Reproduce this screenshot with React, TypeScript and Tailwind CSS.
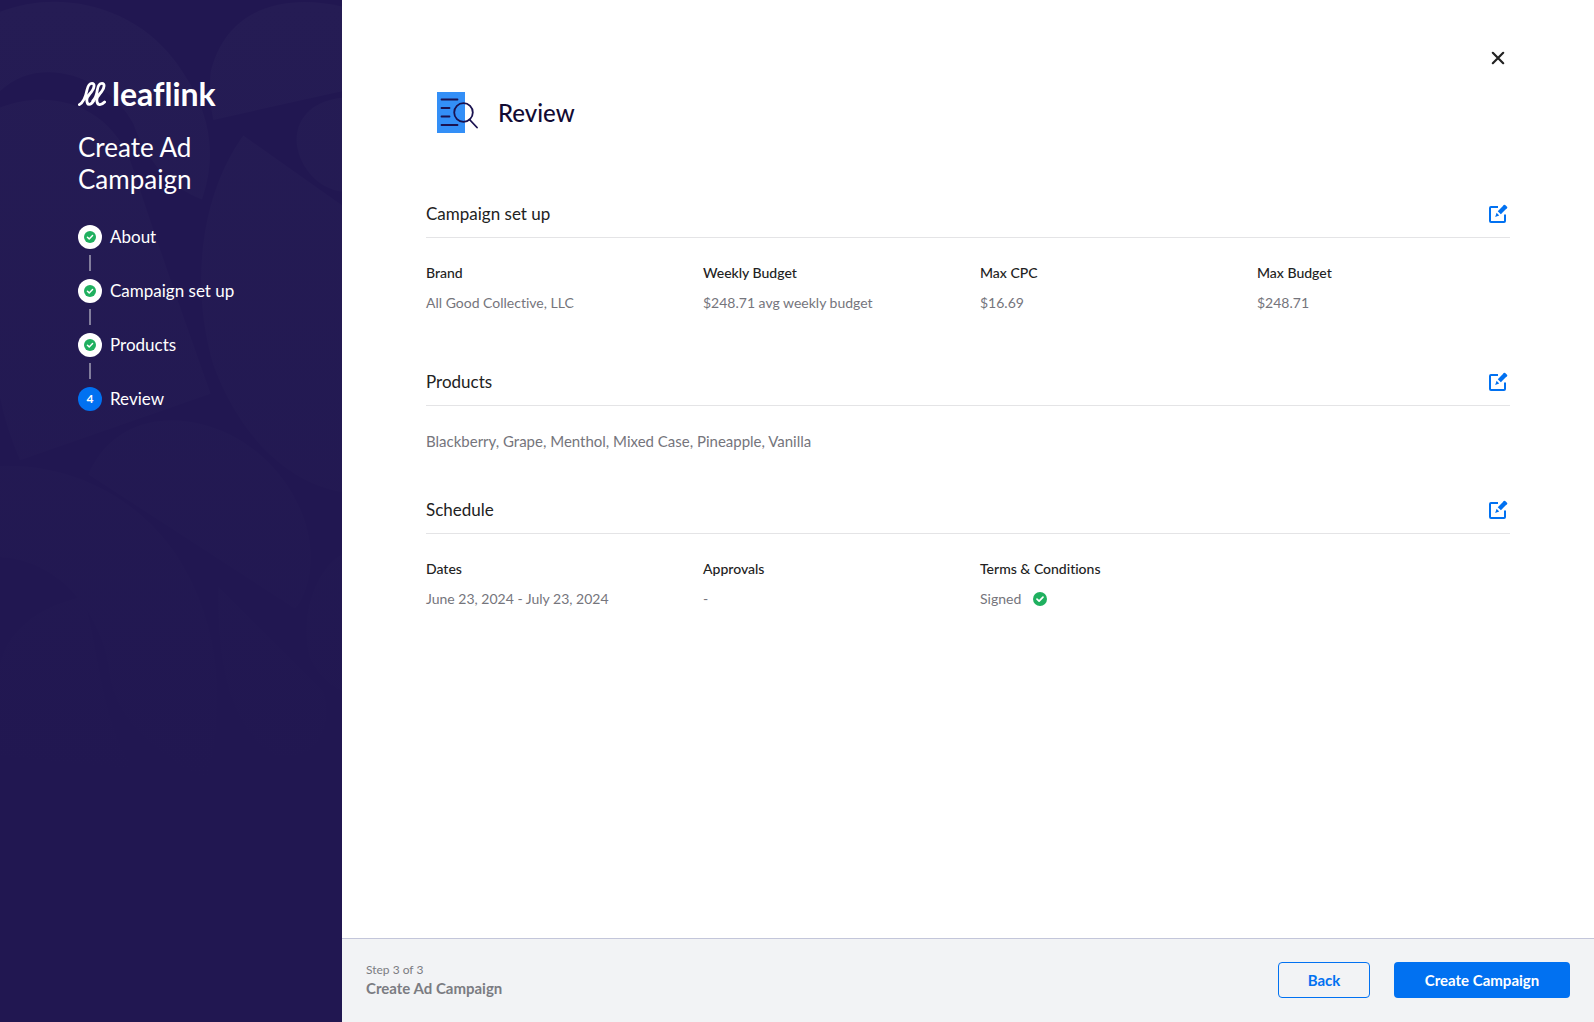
import type { ReactNode } from 'react';

type Field = { label: string; value: ReactNode };

const steps = [
  { label: 'About', done: true },
  { label: 'Campaign set up', done: true },
  { label: 'Products', done: true },
  { label: 'Review', done: false }
];

function CheckBadge({ className }: { className?: string }) {
  return (
    <svg viewBox="0 0 14 14" className={className} aria-hidden="true">
      <circle cx="7" cy="7" r="7" fill="#1fb05f" />
      <path
        d="M4 7.2 6.1 9.2 10 5.2"
        fill="none"
        stroke="#fff"
        strokeWidth="1.7"
        strokeLinecap="round"
        strokeLinejoin="round"
      />
    </svg>
  );
}

function EditIcon() {
  return (
    <svg viewBox="0 0 20 20" className="size-5" aria-hidden="true">
      <path
        d="M10 3H3a1 1 0 0 0-1 1v13a1 1 0 0 0 1 1h13a1 1 0 0 0 1-1v-6.5"
        fill="none"
        stroke="#0171f1"
        strokeWidth="2"
      />
      <path d="M17.500 2.500 11.300 8.700" stroke="#0171f1" strokeWidth="4.400" />
      <path d="M16.500 1.700 18.300 3.500" stroke="#0171f1" strokeWidth="2" strokeLinecap="round" />
      <path d="M8.600 8.8 11.200 11.400 7.200 12.900Z" fill="#0171f1" />
    </svg>
  );
}

function ReviewIcon() {
  return (
    <svg viewBox="0 0 42 42" className="size-[42px]" aria-hidden="true">
      <rect width="28" height="41" x="1" y="0" fill="#338ff7" />
      <g fill="none" stroke="#1a1250" strokeWidth="1.8" strokeLinecap="round">
        <path d="M5.500 7.500h16M5.500 16h8M5.500 24.500h8M5.500 33h16" />
        <circle cx="27.500" cy="20.500" r="9.300" />
        <path d="m33.500 27.500 7.500 8" />
      </g>
    </svg>
  );
}

function Logo() {
  return (
    <div className="flex h-8 items-center text-white">
      <svg viewBox="0 0 28 24" className="mr-1.5 h-6 w-7" aria-hidden="true">
        <g fill="none" stroke="#fff" strokeWidth="2.800" strokeLinecap="round" strokeLinejoin="round">
          <path d="M1.400 22.600C6 20 8 13 9 8 10 3.500 11.500 1.400 14 1.400c3 0 2.500 4.200 0 7.600-2 3-5.200 5-5.200 9 0 6 4 5.500 6.700 1" />
          <path d="M14.800 19c3-3 4-7 4.500-11C20 3.500 21.500 1.400 24 1.400c3 0 2.500 4.200 0 7.600-2 3-5.200 5-5.200 9 0 6 4.500 5.500 7.800 2" />
        </g>
      </svg>
      <span className="text-[32px] leading-8 font-bold">leaflink</span>
    </div>
  );
}

// Faint petals behind the step list
function Petals() {
  return (
    <svg
      viewBox="0 0 1026 1568"
      preserveAspectRatio="none"
      className="absolute inset-0 size-full"
      aria-hidden="true"
    >
      <defs>
        <linearGradient id="petal" gradientUnits="userSpaceOnUse" x1="0" y1="0" x2="0" y2="1200">
          <stop offset="0" stopColor="#251c54" />
          <stop offset="1" stopColor="#211751" />
        </linearGradient>
      </defs>
      <g fill="url(#petal)">
        <path d="M0 18C180-18 400 10 520 90 640 170 650 240 606 306 520 290 440 250 400 190 330 120 120 80 0 140Z" />
        <path d="M632 110C680 10 860-10 1026 10V140L640 184Q625 150 632 110Z" />
        <path d="M1026 150C930 155 885 185 890 220 900 260 960 290 1026 294Z" />
        <path d="M0 165C150 135 340 160 400 260 470 370 560 500 632 604L60 706Q20 660 0 610Z" />
        <path d="M730 208C600 300 570 440 640 560 720 670 860 740 1026 755V315Z" />
        <path d="M265 728C330 650 480 635 600 650 820 675 980 800 920 900Q905 925 885 934Z" />
        <path d="M0 715C200 710 420 760 540 860 660 960 680 1080 620 1200 500 1160 360 1120 330 1040 320 960 200 860 0 855Z" />
        <path d="M250 915C110 930 20 970 0 1020V1160L400 1180C300 1100 300 1000 250 915Z" />
        <path d="M655 900C650 1020 690 1120 830 1160 960 1170 1000 1110 970 1060Z" />
        <path d="M1026 850C930 880 900 960 930 1010 960 1040 1000 1055 1026 1060Z" />
      </g>
    </svg>
  );
}

function Section({
  title,
  className,
  children
}: {
  title: string;
  className?: string;
  children: ReactNode;
}) {
  return (
    <section className={className}>
      <div className="flex items-center justify-between border-b border-[#e4e4e6] pr-0.5 pb-[11px]">
        <h2 className="text-[17px] leading-6 text-[#222]">{title}</h2>
        <button type="button" aria-label={`Edit ${title}`}>
          <EditIcon />
        </button>
      </div>
      <div className="pt-[23px]">{children}</div>
    </section>
  );
}

function Fields({ items }: { items: Field[] }) {
  return (
    <dl className="grid grid-cols-4 gap-6">
      {items.map((item) => (
        <div key={item.label}>
          <dt className="text-sm leading-6 font-medium text-[#222]">{item.label}</dt>
          <dd className="mt-1.5 text-sm leading-6 text-[#75757c]">
            {item.value}
          </dd>
        </div>
      ))}
    </dl>
  );
}

export default function App() {
  return (
    <div className="flex min-h-screen bg-white font-['Lato','Open_Sans',sans-serif] [font-variant-ligatures:none]">
      <aside className="relative w-[342px] shrink-0 bg-[#211751] px-[78px] pt-[78px] text-white">
        <Petals />
        <div className="relative">
          <Logo />
          <h2 className="mt-[21px] text-[26px] leading-8">Create Ad Campaign</h2>
          <ol className="mt-[30px]">
            {steps.map((step, index) => (
              <li key={step.label}>
                {index > 0 ? (
                  <div className="mt-1.5 mb-2 ml-[11px] h-4 w-0.5 bg-[#827d9c]" />
                ) : null}
                <div className="flex items-center gap-2">
                  {step.done ? (
                    <span className="flex size-6 items-center justify-center rounded-full bg-white">
                      <CheckBadge className="size-3" />
                    </span>
                  ) : (
                    <span className="flex size-6 items-center justify-center rounded-full bg-[#0171f1] text-xs font-bold">
                      {index + 1}
                    </span>
                  )}
                  <span className="text-[17px] leading-6">{step.label}</span>
                </div>
              </li>
            ))}
          </ol>
        </div>
      </aside>

      <div className="flex min-w-0 flex-1 flex-col">
        <main className="flex-1 px-[84px] pt-12">
          <div className="flex justify-end pr-0.5">
            <button type="button" aria-label="Close">
              <svg viewBox="0 0 20 20" className="size-5" aria-hidden="true">
                <path
                  d="m4.800 4.800 10.400 10.400M15.200 4.800 4.800 15.200"
                  stroke="#222"
                  strokeWidth="2.200"
                  strokeLinecap="round"
                />
              </svg>
            </button>
          </div>
          <div className="mt-6 flex items-center gap-5 pl-2.5">
            <ReviewIcon />
            <h1 className="text-2xl leading-8 font-medium text-[#120b33]">Review</h1>
          </div>

          <Section title="Campaign set up" className="mt-17">
            <Fields
              items={[
                { label: 'Brand', value: 'All Good Collective, LLC' },
                { label: 'Weekly Budget', value: '$248.71 avg weekly budget' },
                { label: 'Max CPC', value: '$16.69' },
                { label: 'Max Budget', value: '$248.71' }
              ]}
            />
          </Section>
          <Section title="Products" className="mt-[55px]">
            <p className="text-[15px] leading-6 text-[#75757c]">
              Blackberry, Grape, Menthol, Mixed Case, Pineapple, Vanilla
            </p>
          </Section>
          <Section title="Schedule" className="mt-[45px]">
            <Fields
              items={[
                { label: 'Dates', value: 'June 23, 2024 - July 23, 2024' },
                { label: 'Approvals', value: '-' },
                {
                  label: 'Terms & Conditions',
                  value: (
                    <span className="flex items-center gap-3">
                      Signed <CheckBadge className="size-3.5" />
                    </span>
                  )
                }
              ]}
            />
          </Section>
        </main>

        <footer className="flex items-center justify-between border-t border-[#c3c6da] bg-[#f2f3f5] px-6 pt-[23px] pb-6">
          <div className="text-[#7b7c82]">
            <p className="text-xs leading-4">Step 3 of 3</p>
            <p className="text-[15px] leading-5 font-bold">Create Ad Campaign</p>
          </div>
          <div className="flex gap-6">
            <button
              type="button"
              className="h-9 w-[92px] rounded border border-[#0171f1] text-[15px] font-bold text-[#0171f1]"
            >
              Back
            </button>
            <button
              type="button"
              className="h-9 w-44 rounded bg-[#0171f1] text-[15px] font-bold text-white"
            >
              Create Campaign
            </button>
          </div>
        </footer>
      </div>
    </div>
  );
}
